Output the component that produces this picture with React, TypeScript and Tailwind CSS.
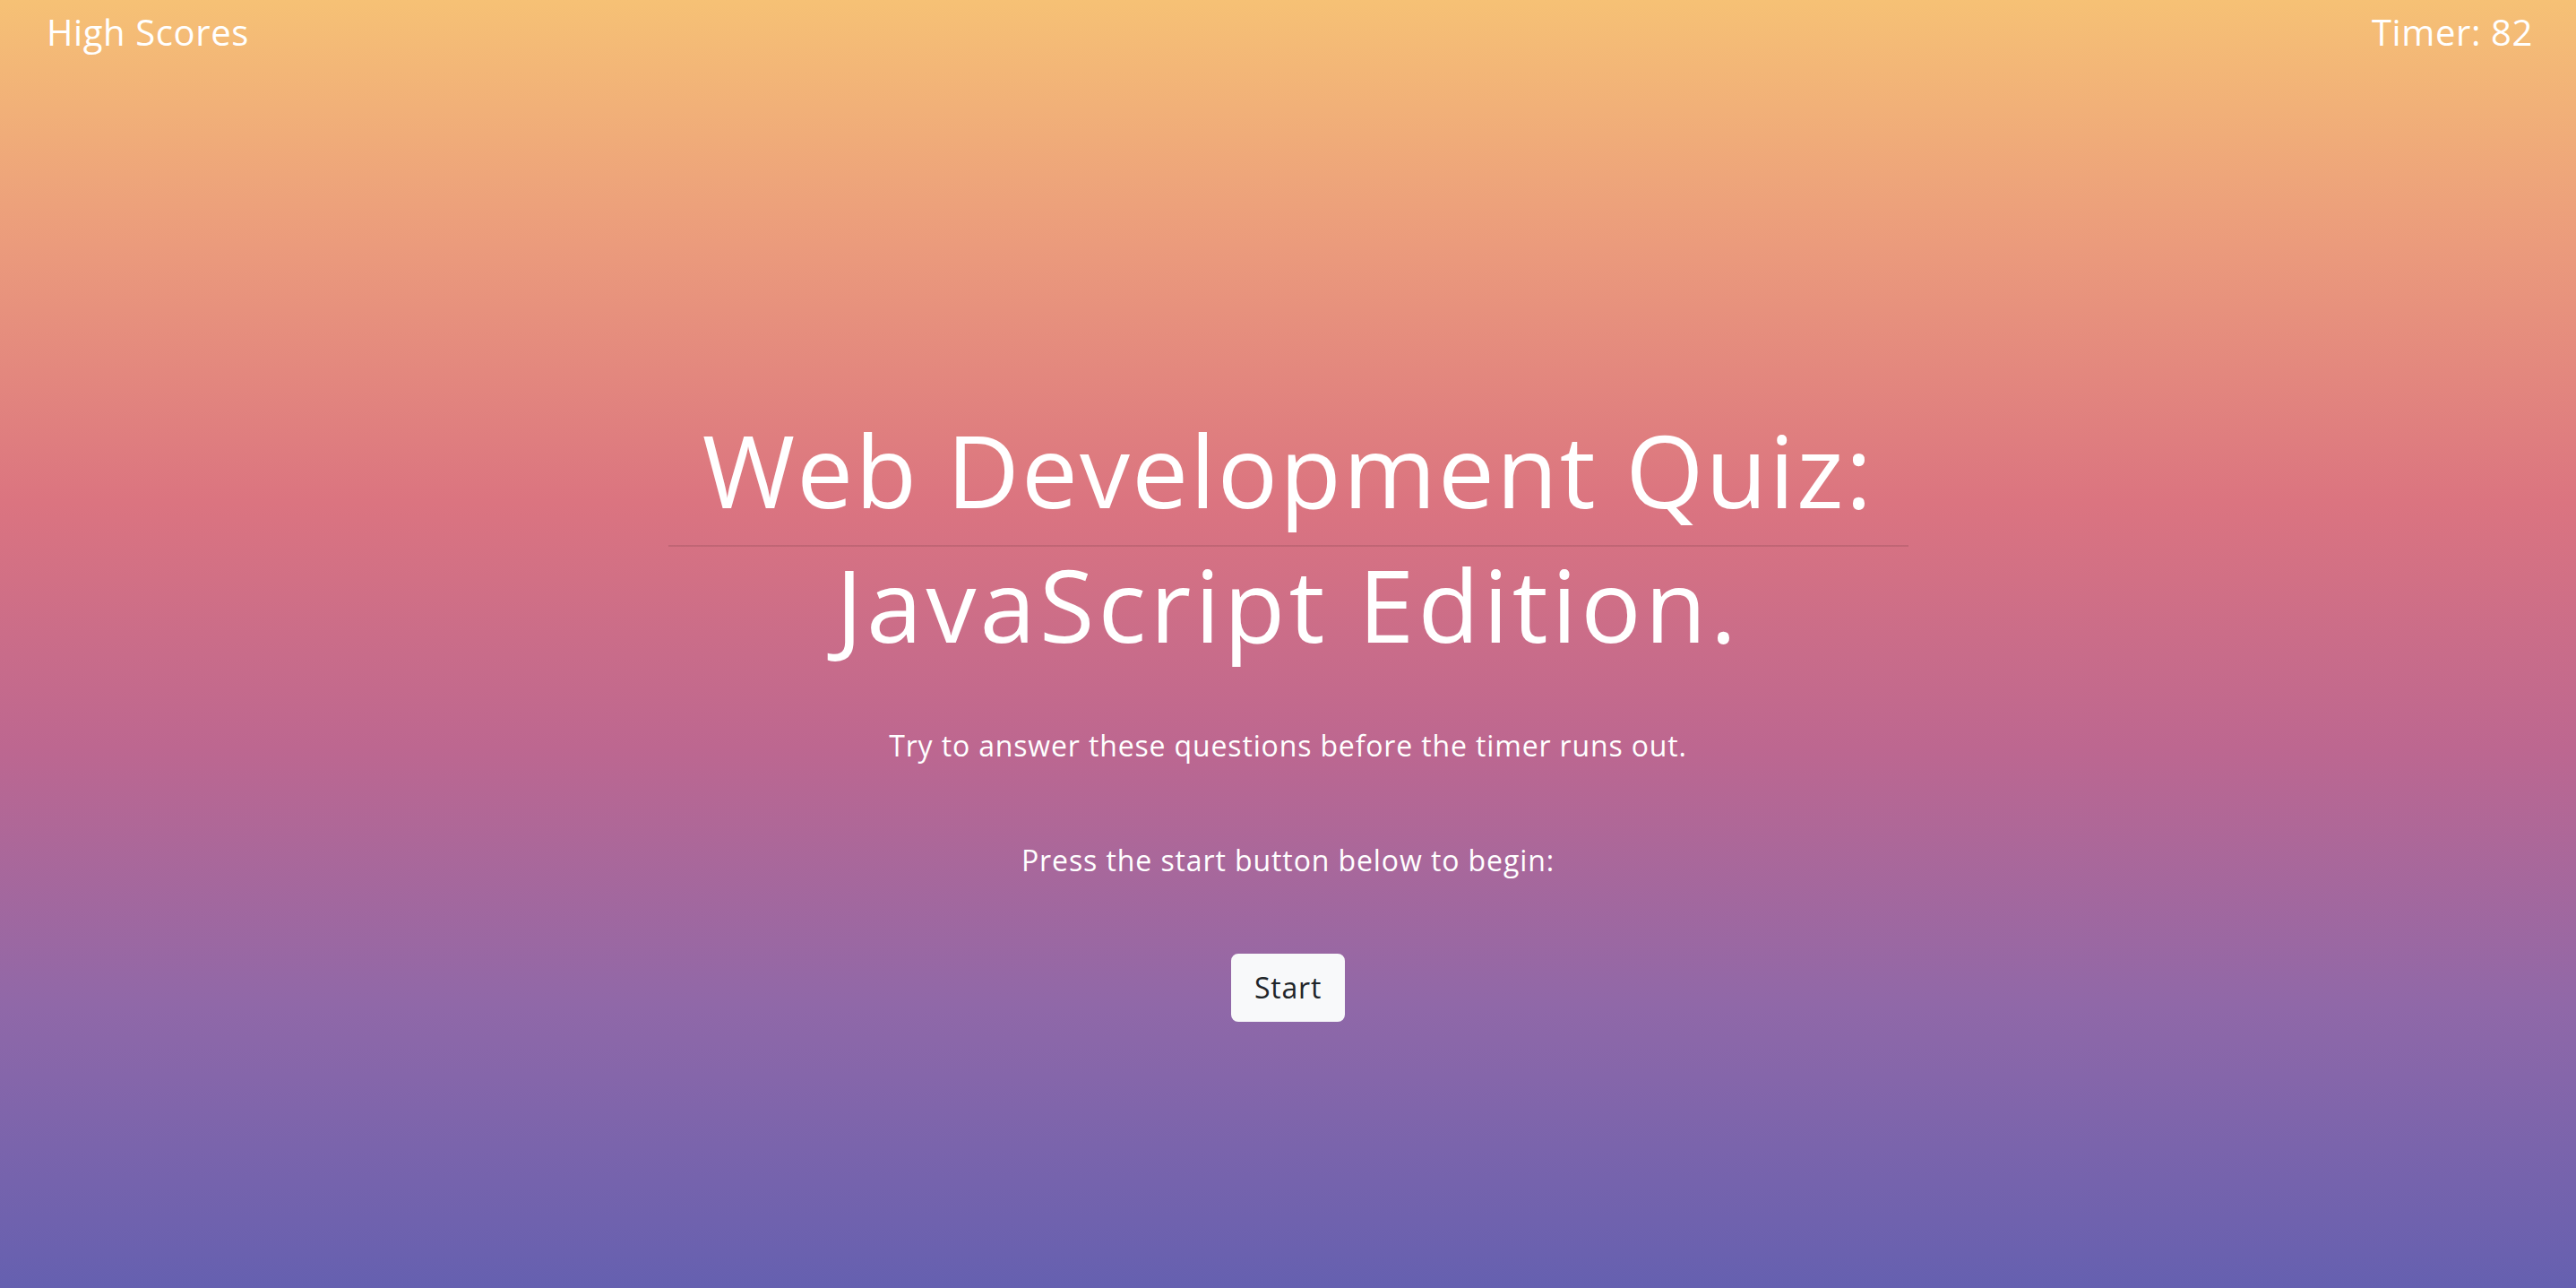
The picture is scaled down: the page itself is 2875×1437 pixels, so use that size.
export default function App() {
  return (
    <div
      className="flex min-h-screen w-full flex-col bg-[linear-gradient(180deg,#f6c175_0%,#eb9b7c_19%,#db7480_39%,#bd6790_58%,#9068a8_78%,#6560b0_100%)] text-white"
      style={{ fontFamily: '"Open Sans", "Liberation Sans", sans-serif' }}
    >
      <nav className="flex items-start justify-between pl-[52px] pr-[48px] pt-[6px] text-[40px] leading-[1.5] tracking-[0.6px]">
        <a href="#">High Scores</a>
        <span>Timer: 82</span>
      </nav>

      <main className="flex flex-col items-center pt-[391px] text-center">
        <div className="flex w-[1384px] flex-col items-center">
          <h1 className="text-[112px] font-normal leading-[1.2] tracking-[2.2px]">Web Development Quiz:</h1>
          <hr className="mt-[17px] w-full border-t-2 border-black/10" />
          <h1 className="-mt-[3px] text-[112px] font-normal leading-[1.2] tracking-[4.2px]">JavaScript Edition.</h1>
        </div>

        <p className="mt-[66px] text-[32px] leading-[1.5] tracking-[0.85px]">
          Try to answer these questions before the timer runs out.
        </p>
        <p className="mt-[80px] text-[32px] leading-[1.5] tracking-[0.9px]">Press the start button below to begin:</p>

        <button className="mt-[80px] rounded-[8px] border-2 border-[#f8f9fa] bg-[#f8f9fa] px-[24px] py-[12px] text-[32px] leading-[1.5] tracking-[0.8px] text-[#212529]">
          Start
        </button>
      </main>
    </div>
  );
}
